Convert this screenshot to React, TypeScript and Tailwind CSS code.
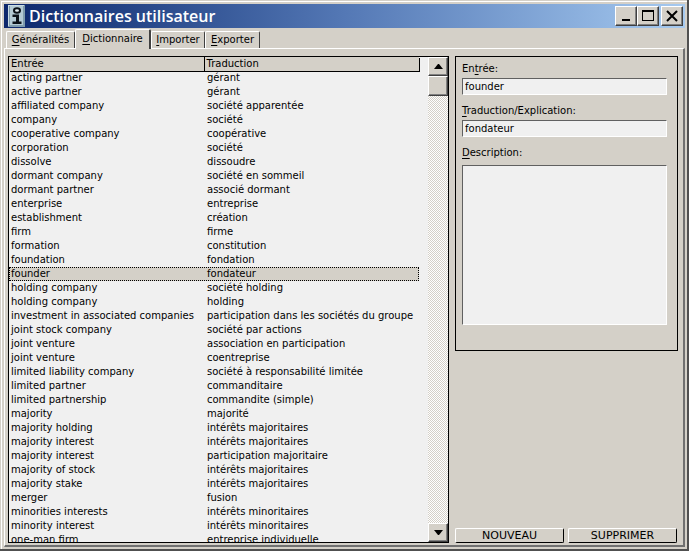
import { useState } from "react";
import type { ReactNode } from "react";

const tabs: { hot: string; rest: string; width: string }[] = [
  { hot: "G", rest: "énéralités", width: "w-[69px]" },
  { hot: "D", rest: "ictionnaire", width: "w-[76px]" },
  { hot: "I", rest: "mporter", width: "w-[54px]" },
  { hot: "E", rest: "xporter", width: "w-[55px]" },
];

const entries: [string, string][] = [
  ["acting partner", "gérant"],
  ["active partner", "gérant"],
  ["affiliated company", "société apparentée"],
  ["company", "société"],
  ["cooperative company", "coopérative"],
  ["corporation", "société"],
  ["dissolve", "dissoudre"],
  ["dormant company", "société en sommeil"],
  ["dormant partner", "associé dormant"],
  ["enterprise", "entreprise"],
  ["establishment", "création"],
  ["firm", "firme"],
  ["formation", "constitution"],
  ["foundation", "fondation"],
  ["founder", "fondateur"],
  ["holding company", "société holding"],
  ["holding company", "holding"],
  ["investment in associated companies", "participation dans les sociétés du groupe"],
  ["joint stock company", "société par actions"],
  ["joint venture", "association en participation"],
  ["joint venture", "coentreprise"],
  ["limited liability company", "société à responsabilité limitée"],
  ["limited partner", "commanditaire"],
  ["limited partnership", "commandite (simple)"],
  ["majority", "majorité"],
  ["majority holding", "intérêts majoritaires"],
  ["majority interest", "intérêts majoritaires"],
  ["majority interest", "participation majoritaire"],
  ["majority of stock", "intérêts majoritaires"],
  ["majority stake", "intérêts majoritaires"],
  ["merger", "fusion"],
  ["minorities interests", "intérêts minoritaires"],
  ["minority interest", "intérêts minoritaires"],
  ["one-man firm", "entreprise individuelle"],
];

const raised = "border border-t-white border-l-white border-r-[#404040] border-b-[#404040] bg-[#d4d0c8]";
const sunken =
  "block w-full resize-none border border-t-[#606060] border-l-[#606060] border-r-white border-b-white bg-[#f0f0f0] px-0.5 outline-none";

function AppIcon() {
  return (
    <svg width="17" height="22" viewBox="0 0 17 22" className="shrink-0">
      <rect width="17" height="22" fill="#7f9bac" />
      <path d="M0 0h16v1H1v20H0z" fill="#c9dbe2" />
      <path d="M2 1h13v19H2z" fill="#b4cad4" />
      <ellipse cx="9" cy="5.5" rx="3" ry="2.3" fill="#dfeaee" stroke="#0b1118" strokeWidth="2" />
      <path d="M4.5 9.5H11v7h2.5V19h-9v-2.5H8V12H4.5z" fill="#0b1118" />
    </svg>
  );
}

function WindowButton({ label, children }: { label: string; children: ReactNode }) {
  return (
    <button aria-label={label} className={`grid h-5 w-[22px] place-items-center shadow-[inset_-1px_-1px_0_#808080] ${raised}`}>
      <svg width="14" height="14" viewBox="0 0 14 14">
        {children}
      </svg>
    </button>
  );
}

function ScrollButton({ label, d }: { label: string; d: string }) {
  return (
    <button aria-label={label} className={`grid h-[19px] w-full shrink-0 place-items-center shadow-[inset_-1px_-1px_0_#808080] ${raised}`}>
      <svg width="9" height="5" viewBox="0 0 9 5">
        <path d={d} fill="#000" />
      </svg>
    </button>
  );
}

export default function App() {
  const [tab, setTab] = useState(1);
  const [selected, setSelected] = useState(14);
  const [word, translation] = entries[selected];

  return (
    <div className="flex h-screen flex-col overflow-hidden border-r-2 border-b-2 border-[#505050] bg-[#d4d0c8] pt-px pl-px font-['DejaVu_Sans',sans-serif] text-[10px] leading-[14px] text-black">
      <div className="flex min-h-0 flex-1 flex-col border-t border-l border-white p-0.5">
        <header className="flex h-6 shrink-0 items-center bg-linear-to-r from-[#0d276c] via-[#5478b5] to-[#a6caf0] pr-0.5 pl-1">
          <AppIcon />
          <h1 className="ml-1 flex-1 font-['Open_Sans','Noto_Sans',sans-serif] text-[16px] leading-6 font-semibold text-white">
            Dictionnaires utilisateur
          </h1>
          <div className="flex">
            <WindowButton label="Réduire">
              <path d="M3 10h8v2H3z" />
            </WindowButton>
            <WindowButton label="Agrandir">
              <path d="M1 1h12v11H1zM2 3v8h10V3z" fillRule="evenodd" />
            </WindowButton>
            <div className="w-0.5" />
            <WindowButton label="Fermer">
              <path d="M2 2l10 10M12 2L2 12" stroke="#000" strokeWidth="2" />
            </WindowButton>
          </div>
        </header>

        <nav role="tablist" className="relative flex h-5 shrink-0 items-end pl-0.5">
          {tabs.map((t, i) => (
            <button
              key={t.rest}
              role="tab"
              aria-selected={tab === i}
              onClick={() => setTab(i)}
              className={`rounded-t-xs border border-b-0 border-t-white border-l-white border-r-[#404040] bg-[#d4d0c8] text-center whitespace-nowrap ${t.width} ${
                tab === i ? "z-10 -mb-px h-5 border-r-2 pb-0.5" : "h-[17px]"
              }`}
            >
              <span className="underline underline-offset-2">{t.hot}</span>
              {t.rest}
            </button>
          ))}
        </nav>

        <main className="flex min-h-0 flex-1 gap-1.5 border-t border-r-2 border-b-2 border-l border-t-white border-r-[#707070] border-b-[#707070] border-l-white pt-[7px] pr-[5px] pb-0.5 pl-[3px]">
          <div className="flex min-w-0 flex-1 border border-black bg-[#f0f0f0]">
            <div className="min-w-0 flex-1 overflow-hidden pr-[9px]">
              <table className="w-full table-fixed border-collapse text-left">
                <thead>
                  <tr className="h-3.5 bg-[#d4d0c8] shadow-[1px_1px_0_#000]">
                    <th className="w-[195px] border-r border-black p-0 pl-0.5 font-normal">Entrée</th>
                    <th className="p-0 pl-0.5 font-normal">Traduction</th>
                  </tr>
                </thead>
                <tbody>
                  {entries.map(([source, target], i) => (
                    <tr
                      key={i}
                      onClick={() => setSelected(i)}
                      className={`h-3.5 whitespace-nowrap ${
                        i === selected ? "bg-[#d4d0c8] outline-1 -outline-offset-1 outline-dotted outline-black" : ""
                      }`}
                    >
                      <td className="p-0 pl-0.5">{source}</td>
                      <td className="p-0 pl-[3px]">{target}</td>
                    </tr>
                  ))}
                </tbody>
              </table>
            </div>
            <div className="flex w-5 shrink-0 flex-col bg-[conic-gradient(#d4d0c8_25%,#fff_0_50%,#d4d0c8_0_75%,#fff_0)] bg-size-[2px_2px]">
              <ScrollButton label="Défiler vers le haut" d="M4 0h1l4 5H0z" />
              <div className={`h-5 shrink-0 shadow-[inset_-1px_-1px_0_#808080] ${raised}`} />
              <div className="flex-1" />
              <ScrollButton label="Défiler vers le bas" d="M0 0h9L5 5H4z" />
            </div>
          </div>

          <aside className="flex w-[223px] shrink-0 flex-col justify-between">
            <form key={selected} className="border border-black pt-[5px] pr-2.5 pb-[25px] pl-1.5">
              <label htmlFor="entry" className="block pb-0.5">
                En<span className="underline underline-offset-2">t</span>rée:
              </label>
              <input id="entry" defaultValue={word} className={`h-[17px] ${sunken}`} />
              <label htmlFor="translation" className="block pt-[9px] pb-0.5">
                <span className="underline underline-offset-2">T</span>raduction/Explication:
              </label>
              <input id="translation" defaultValue={translation} className={`h-[17px] ${sunken}`} />
              <label htmlFor="description" className="block pt-[9px] pb-[5px]">
                <span className="underline underline-offset-2">D</span>escription:
              </label>
              <textarea id="description" className={`h-40 ${sunken}`} />
            </form>
            <div className="flex gap-1 pr-px">
              {["NOUVEAU", "SUPPRIMER"].map((label) => (
                <button
                  key={label}
                  className="h-[15px] flex-1 rounded-xs border border-t-white border-r-black border-b-black border-l-white text-[11px] leading-3"
                >
                  {label}
                </button>
              ))}
            </div>
          </aside>
        </main>
      </div>
    </div>
  );
}
